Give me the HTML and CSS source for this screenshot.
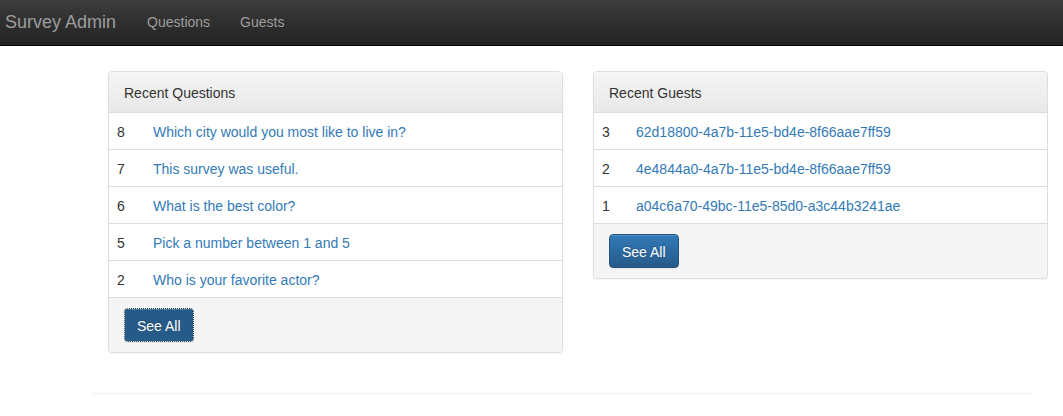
FILE: index.html
```html
<!DOCTYPE html>
<html>
<head>
<meta charset="utf-8">
<title>Survey Admin</title>
<link rel="stylesheet" href="styles.css">
</head>
<body>
<nav class="navbar">
  <a class="brand" href="#">Survey Admin</a>
  <ul class="nav">
    <li><a href="#">Questions</a></li>
    <li><a href="#">Guests</a></li>
  </ul>
</nav>
<main class="page">
  <div class="container">
    <div class="row">
      <section class="panel">
        <div class="panel-heading">Recent Questions</div>
        <table class="table table-q">
          <tr><td class="num">8</td><td><a href="#">Which city would you most like to live in?</a></td></tr>
          <tr><td class="num">7</td><td><a href="#">This survey was useful.</a></td></tr>
          <tr><td class="num">6</td><td><a href="#">What is the best color?</a></td></tr>
          <tr><td class="num">5</td><td><a href="#">Pick a number between 1 and 5</a></td></tr>
          <tr><td class="num">2</td><td><a href="#">Who is your favorite actor?</a></td></tr>
        </table>
        <div class="panel-footer"><a class="btn btn-focus" href="#">See All</a></div>
      </section>
      <section class="panel">
        <div class="panel-heading">Recent Guests</div>
        <table class="table table-g">
          <tr><td class="num">3</td><td><a href="#">62d18800-4a7b-11e5-bd4e-8f66aae7ff59</a></td></tr>
          <tr><td class="num">2</td><td><a href="#">4e4844a0-4a7b-11e5-bd4e-8f66aae7ff59</a></td></tr>
          <tr><td class="num">1</td><td><a href="#">a04c6a70-49bc-11e5-85d0-a3c44b3241ae</a></td></tr>
        </table>
        <div class="panel-footer"><a class="btn" href="#">See All</a></div>
      </section>
    </div>
    <hr class="rule">
  </div>
</main>
</body>
</html>
```

FILE: styles.css
```css
* { box-sizing: border-box; }
html, body { margin: 0; padding: 0; }
body {
  font-family: "Liberation Sans", Arial, Helvetica, sans-serif;
  font-size: 14px;
  line-height: 20px;
  color: #333;
  background: #fff;
}
a { color: #337ab7; text-decoration: none; }

.navbar {
  height: 46px;
  display: flex;
  align-items: center;
  background: linear-gradient(to bottom, #3c3c3c 0%, #222 100%);
  border-bottom: 1px solid #080808;
}
.brand {
  display: block;
  padding: 0 15px 0 5px;
  font-size: 18px;
  line-height: 20px;
  color: #9d9d9d;
  margin-top: -2px;
}
.nav {
  display: flex;
  list-style: none;
  margin: 0;
  padding: 0;
}
.nav a {
  display: block;
  padding: 0 15px 0 16px;
  color: #9d9d9d;
  line-height: 20px;
  margin-top: -2px;
}
.nav li + li a { padding-left: 15px; }

.page { padding: 25px 0 0 93px; }
.container { width: 940px; }
.row {
  margin-left: 15px;
  display: grid;
  grid-template-columns: 455px 455px;
  column-gap: 30px;
  align-items: start;
}
.panel {
  border: 1px solid #ddd;
  border-radius: 4px;
  background: #fff;
  box-shadow: 0 1px 2px rgba(0,0,0,.05);
  margin-bottom: 20px;
  overflow: hidden;
}
.panel-heading {
  padding: 11px 15px 9px;
  background: linear-gradient(to bottom, #f5f5f5 0%, #e8e8e8 100%);
  border-bottom: 1px solid #ddd;
  color: #333;
}
.table {
  width: 100%;
  border-collapse: collapse;
  border-spacing: 0;
}
.table td {
  padding: 9px 8px 7px;
  line-height: 20px;
  vertical-align: top;
}
.table tr + tr td { border-top: 1px solid #ddd; }
.table-q .num { width: 36px; }
.table-g .num { width: 34px; }
.panel-footer {
  padding: 10px 15px;
  background: #f5f5f5;
  border-top: 1px solid #ddd;
}
.btn {
  display: inline-block;
  padding: 7px 12px 5px;
  font-size: 14px;
  line-height: 20px;
  color: #fff;
  background: linear-gradient(to bottom, #337ab7 0%, #265a88 100%);
  border: 1px solid #245580;
  border-radius: 4px;
  text-shadow: 0 -1px 0 rgba(0,0,0,.2);
  box-shadow: inset 0 1px 0 rgba(255,255,255,.15), 0 1px 1px rgba(0,0,0,.075);
}
.btn-focus {
  background: #265a88;
  border-color: #122b40;
  outline: 1px dotted #fff;
  outline-offset: -1px;
}
.rule {
  margin: 20px 0;
  border: 0;
  border-top: 1px solid #eee;
  width: 940px;
}
```
